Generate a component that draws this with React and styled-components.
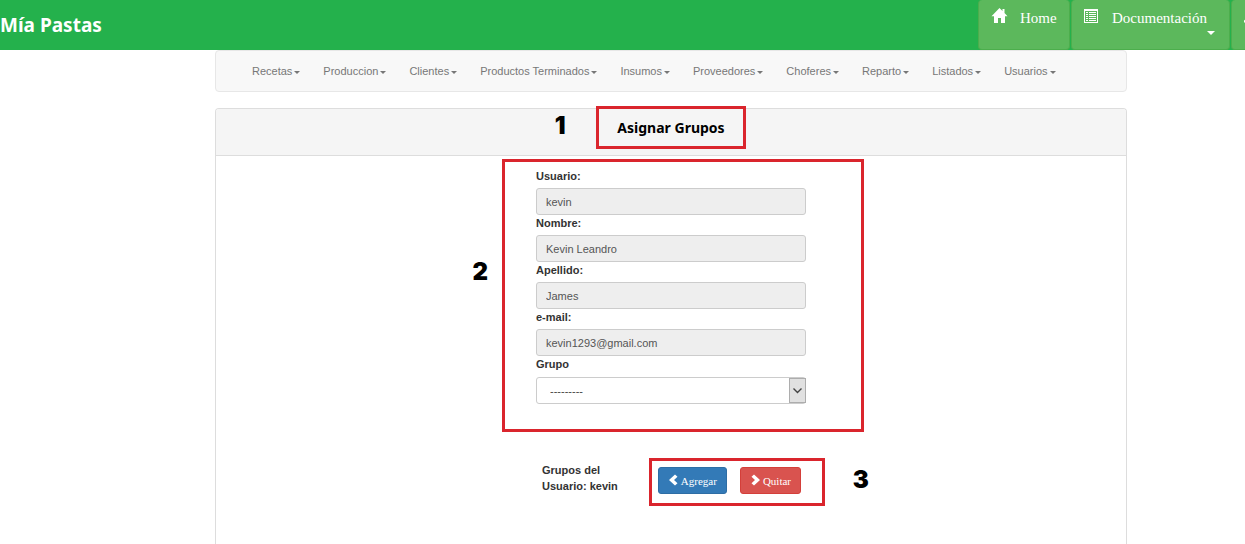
import React from "react";
import styled, { createGlobalStyle } from "styled-components";

const GlobalStyle = createGlobalStyle`
  *, *::before, *::after { box-sizing: border-box; }
  body {
    margin: 0;
    background: #fff;
    color: #333;
    font-family: "Liberation Sans", Arial, sans-serif;
    font-size: 11px;
    line-height: 16px;
  }
`;

const Page = styled.div`
  display: flex;
  flex-direction: column;
  min-height: 100vh;
  overflow-x: hidden;
`;

const TopBar = styled.header`
  display: flex;
  justify-content: space-between;
  height: 50px;
  background: #24b14c;
  overflow: hidden;
`;

const Brand = styled.h1`
  margin: 0;
  color: #fff;
  font: bold 19px/50px "Noto Sans", Tahoma, sans-serif;
  white-space: nowrap;
`;

const TopLinks = styled.nav`
  display: flex;
  gap: 1px;
  margin-right: -28px;
`;

const TopLink = styled.a`
  display: flex;
  flex: none;
  align-items: flex-start;
  gap: 12px;
  width: ${(p) => p.$width}px;
  padding: 7px 12px;
  border: 1px solid #4cae4c;
  border-top: 0;
  border-radius: 4px;
  background: #5cb85c;
  color: #fff;
  font: 15px/22px "Liberation Serif", "Times New Roman", serif;
  text-decoration: none;
  white-space: nowrap;
`;

const CaretLabel = styled.span`
  display: flex;
  flex-direction: column;
  align-items: flex-end;
`;

const Caret = styled.span`
  display: inline-block;
  border: solid transparent;
  border-width: ${(p) => p.$size}px ${(p) => p.$size}px 0;
  border-top-color: currentColor;
  margin: ${(p) => (p.$under ? "2px -8px 0 0" : "2px 0 0 2px")};
`;

const Main = styled.main`
  display: flex;
  flex: 1;
  flex-direction: column;
  gap: 16px;
  padding: 0 118px 0 215px;
`;

const MenuBar = styled.nav`
  display: flex;
  align-items: center;
  gap: 23px;
  height: 42px;
  padding: 0 36px;
  border: 1px solid #e7e7e7;
  border-radius: 4px;
  background: #f8f8f8;
`;

const MenuLink = styled.a`
  display: flex;
  align-items: center;
  color: #777;
  text-decoration: none;
  white-space: nowrap;
`;

const Panel = styled.section`
  flex: 1;
  border: 1px solid #ddd;
  border-bottom: 0;
  border-radius: 4px 4px 0 0;
`;

const PanelHeader = styled.header`
  display: flex;
  justify-content: center;
  align-items: center;
  height: 47px;
  padding-bottom: 8px;
  border-bottom: 1px solid #ddd;
  border-radius: 3px 3px 0 0;
  background: #f5f5f5;
`;

const Title = styled.h2`
  margin: 0;
  color: #000;
  font: bold 14px/20px "Noto Sans", Tahoma, sans-serif;
  white-space: nowrap;
`;

const Annotated = styled.div`
  position: relative;
`;

const Frame = styled.div`
  position: absolute;
  inset: ${(p) => p.$inset};
  border: 3px solid #da252d;
  pointer-events: none;
`;

const Mark = styled.span`
  position: absolute;
  top: 50%;
  ${(p) => p.$side}: ${(p) => p.$offset}px;
  margin-top: ${(p) => p.$lift}px;
  color: #000;
  font: 900 24px/24px Inter, "Arial Black", sans-serif;
`;

const Form = styled.form`
  display: flex;
  flex-direction: column;
  gap: 58px;
  width: 270px;
  margin: 0 auto;
  padding-top: 12px;
`;

const Label = styled.label`
  display: block;
  height: 20px;
  font-weight: bold;
`;

const TextInput = styled.input`
  display: block;
  width: 100%;
  height: 27px;
  padding: 0 9px;
  border: 1px solid #ccc;
  border-radius: 3px;
  background: #eee;
  color: #555;
  font: inherit;
`;

const SelectBox = styled.div`
  position: relative;
  margin-top: 1px;
`;

const Select = styled.select`
  display: block;
  width: 100%;
  height: 27px;
  padding: 0 30px 0 13px;
  border: 1px solid #ccc;
  border-radius: 3px;
  appearance: none;
  background: #fff;
  color: #444;
  font: inherit;
`;

const SelectArrow = styled.span`
  position: absolute;
  top: 1px;
  right: 0;
  bottom: 1px;
  display: flex;
  align-items: center;
  justify-content: center;
  width: 17px;
  border: 1px solid #adadad;
  background: #e1e1e1;
  pointer-events: none;
`;

const GroupRow = styled.div`
  display: flex;
  align-items: flex-start;
  justify-content: space-between;
  padding: 0 5px 0 6px;
`;

const GroupLabel = styled.strong`
  width: 80px;
`;

const Buttons = styled.div`
  display: flex;
  gap: 13px;
  padding-top: 5px;
`;

const Button = styled.button`
  display: flex;
  align-items: center;
  gap: 2px;
  height: 27px;
  padding: 0 9px;
  border: 1px solid ${(p) => (p.$danger ? "#d43f3a" : "#2e6da4")};
  border-radius: 3px;
  background: ${(p) => (p.$danger ? "#d9534f" : "#337ab7")};
  color: #fff;
  font: 11px/16px "Liberation Serif", "Times New Roman", serif;
  white-space: nowrap;
`;

const HomeIcon = () => (
  <svg width="17" height="17" viewBox="0 0 17 17" fill="currentColor" aria-hidden="true">
    <path d="M8.5 1 11.5 4V2h2v4l3 3.200H14V16h-4v-5H7v5H3V9.200H.5z" />
  </svg>
);

const ListIcon = () => (
  <svg width="16" height="17" viewBox="0 0 16 17" fill="none" stroke="currentColor" aria-hidden="true">
    <rect x=".5" y="2.500" width="13" height="13" />
    <path d="M0 3.500h14M2 5.500h2M5 5.500h7M2 7.500h2M5 7.500h7M2 9.500h2M5 9.500h7M2 11.500h2M5 11.500h7M2 13.500h2M5 13.500h7" />
  </svg>
);

const UserIcon = () => (
  <svg width="17" height="17" viewBox="0 0 17 17" fill="currentColor" aria-hidden="true">
    <path d="M8.500 1C6.300 1 5 2.500 5 5c0 2 .8 3.500 2 4.300v1.200L1 13c-.7.300-1 .8-1 1.500V16h17v-1.500c0-.7-.3-1.200-1-1.500l-6-2.500V9.300C11.200 8.500 12 7 12 5c0-2.500-1.300-4-3.500-4z" />
  </svg>
);

const Chevron = ({ right }) => (
  <svg width="11" height="13" viewBox="0 0 11 13" fill="currentColor" aria-hidden="true">
    <path d={right ? "M4 .5 10 6 4 11.500 1.500 9.200 5 6 1.500 2.800z" : "M7 .5 1 6 7 11.500 9.500 9.200 6 6 9.500 2.800z"} />
  </svg>
);

const menu = [
  "Recetas", "Produccion", "Clientes", "Productos Terminados", "Insumos",
  "Proveedores", "Choferes", "Reparto", "Listados", "Usuarios",
];

const fields = [
  { id: "usuario", label: "Usuario:", value: "kevin" },
  { id: "nombre", label: "Nombre:", value: "Kevin Leandro" },
  { id: "apellido", label: "Apellido:", value: "James" },
  { id: "email", label: "e-mail:", value: "kevin1293@gmail.com" },
];

export default function App() {
  return (
    <Page>
      <GlobalStyle />
      <TopBar>
        <Brand>Mía Pastas</Brand>
        <TopLinks>
          <TopLink href="#home" $width={92}><HomeIcon />Home</TopLink>
          <TopLink href="#docs" $width={159}>
            <ListIcon />
            <CaretLabel>Documentación<Caret $size={4} $under /></CaretLabel>
          </TopLink>
          <TopLink href="#account" $width={42} aria-label="Cuenta"><UserIcon /></TopLink>
        </TopLinks>
      </TopBar>
      <Main>
        <MenuBar>
          {menu.map((name) => (
            <MenuLink href={"#" + name} key={name}>{name}<Caret $size={3} /></MenuLink>
          ))}
        </MenuBar>
        <Panel>
          <PanelHeader>
            <Annotated>
              <Title>Asignar Grupos</Title>
              <Frame $inset="-12px -21px -11px -21px" />
              <Mark $side="right" $offset={159} $lift={-14}>1</Mark>
            </Annotated>
          </PanelHeader>
          <Form onSubmit={(e) => e.preventDefault()}>
            <Annotated>
              {fields.map((f) => (
                <div key={f.id}>
                  <Label htmlFor={f.id}>{f.label}</Label>
                  <TextInput id={f.id} defaultValue={f.value} disabled />
                </div>
              ))}
              <Label htmlFor="grupo">Grupo</Label>
              <SelectBox>
                <Select id="grupo"><option>---------</option></Select>
                <SelectArrow>
                  <svg width="9" height="6" viewBox="0 0 9 6" fill="none" stroke="#444" strokeWidth="1.400" aria-hidden="true">
                    <path d="M.5.5l4 4 4-4" />
                  </svg>
                </SelectArrow>
              </SelectBox>
              <Frame $inset="-9px -58px -28px -34px" />
              <Mark $side="right" $offset={318} $lift={-26}>2</Mark>
            </Annotated>
            <GroupRow>
              <GroupLabel>Grupos del Usuario: kevin</GroupLabel>
              <Annotated>
                <Buttons>
                  <Button type="button"><Chevron />Agregar</Button>
                  <Button type="button" $danger><Chevron right />Quitar</Button>
                </Buttons>
                <Frame $inset="-4px -24px -12px -9px" />
                <Mark $side="left" $offset={195} $lift={-10}>3</Mark>
              </Annotated>
            </GroupRow>
          </Form>
        </Panel>
      </Main>
    </Page>
  );
}
